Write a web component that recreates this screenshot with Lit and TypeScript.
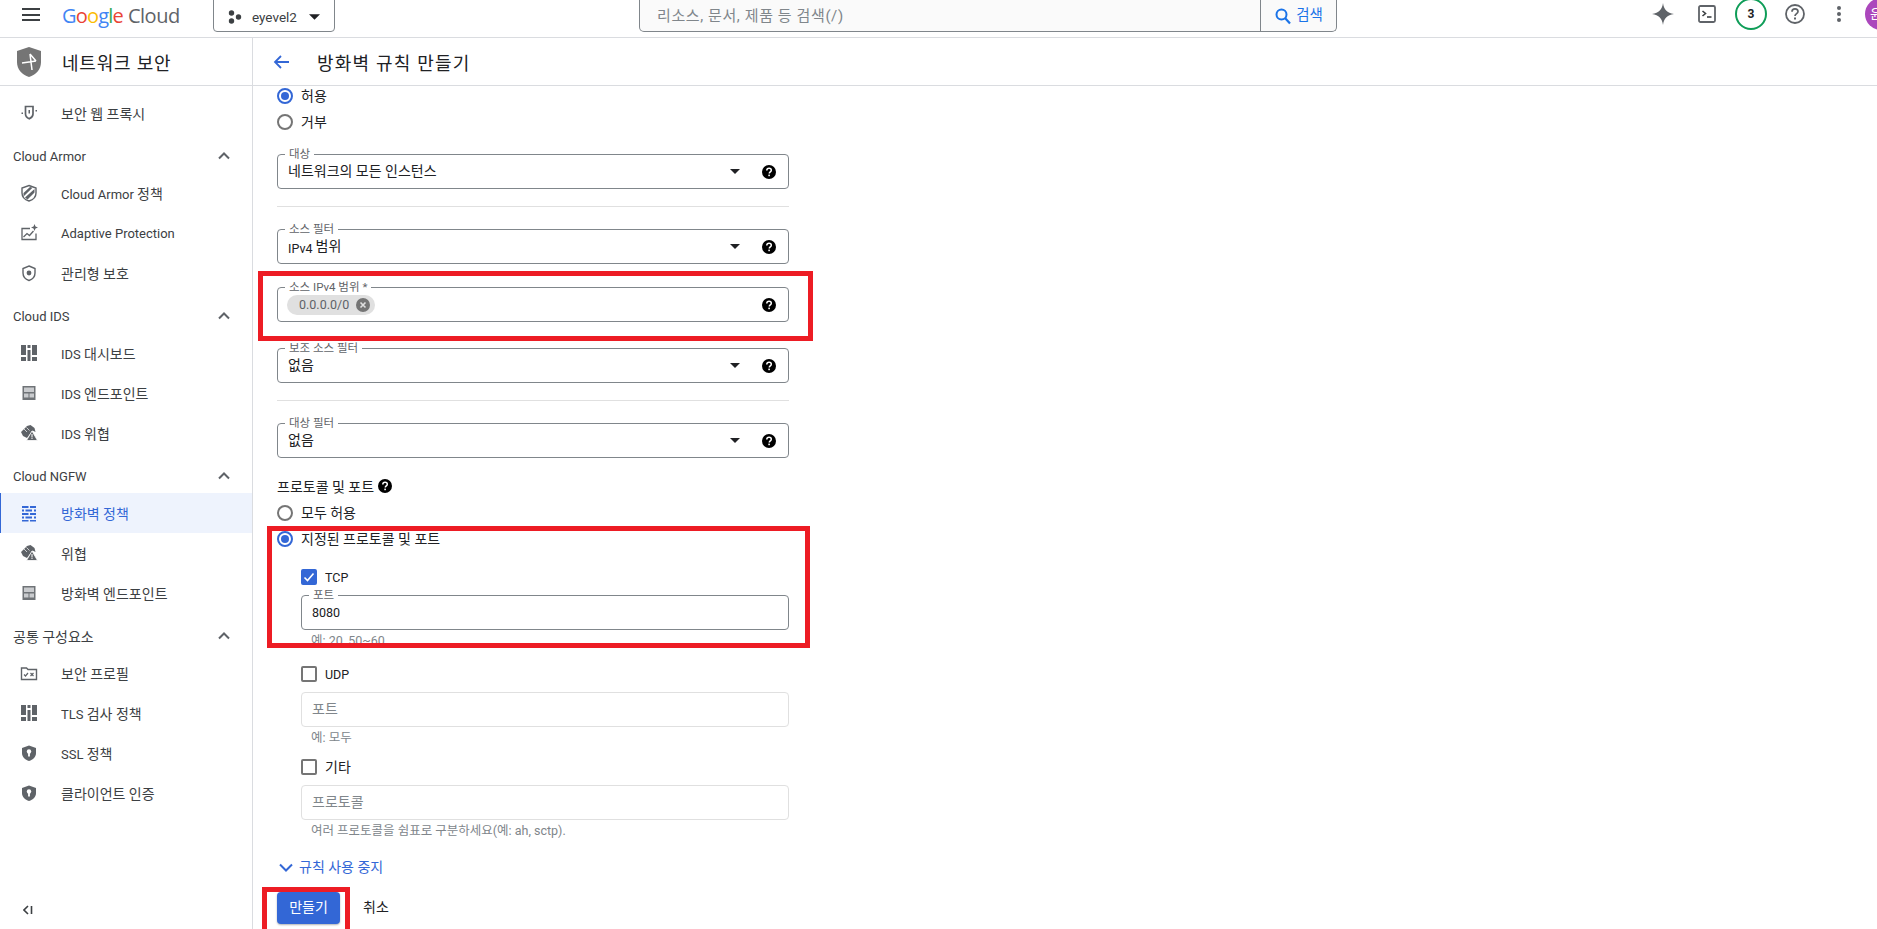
import { LitElement, html, css, svg } from "lit";
import { customElement } from "lit/decorators.js";

const icons: Record<string, any> = {
  proxy: svg`<path d="M5.500 2.500h7.500v7.500c0 2.400-1.700 3.800-3.700 4.800-2.100-1-3.800-2.400-3.800-4.800z" fill="none" stroke="#5f6368" stroke-width="1.700"/><rect x="8.500" y="6" width="1.500" height="3.500" fill="#5f6368"/><rect x="1.500" y="8.500" width="1.500" height="1.500" fill="#5f6368"/><rect x="15.500" y="6" width="1.500" height="1.500" fill="#5f6368"/>`,
  armor: svg`<path d="M9 1.500l7 2.500v5c0 4-3 6.800-7 8-4-1.200-7-4-7-8V4z" fill="none" stroke="#5f6368" stroke-width="1.400"/><path d="M3.500 9L10 3l2.500.8-9 8.700zM5 13.500L14.500 5v3.500l-7 7z" fill="#5f6368"/>`,
  adaptive: svg`<path d="M10 4.500H2v11h14V9.500" fill="none" stroke="#5f6368" stroke-width="1.300"/><path d="M3.500 13l3.500-3.500 2.500 2 4-4.500" fill="none" stroke="#5f6368" stroke-width="1.300"/><path d="M14.500 0l1 2.500 2.500 1-2.500 1-1 2.500-1-2.500-2.500-1 2.500-1z" fill="#5f6368"/>`,
  managed: svg`<path d="M9 2l6 2.500v4.500c0 3.700-2.500 6.300-6 7.500-3.500-1.200-6-3.800-6-7.500V4.500z" fill="none" stroke="#5f6368" stroke-width="1.400"/><circle cx="9" cy="9" r="2.400" fill="#5f6368"/>`,
  dash: svg`<path d="M1 1h5v10H1zM1 13h5v4H1zM7.500 1h3v3h-3zM7.500 6h3v11h-3zM12 1h5v10h-5zM12 13h5v4h-5z" fill="#5f6368"/>`,
  endpoint: svg`<rect x="2.500" y="2" width="13" height="14" fill="#6f7377"/><path d="M4 3.500h10v4.500H4zM4 9.500h4.500v4H4zM9.500 9.500H14v4H9.500z" fill="#c9cbce"/>`,
  threat: svg`<path d="M7 2l3.500-1 4 3 1 4-3-1.500L7 14l-4-2-2-4z" fill="#5f6368"/><path d="M12 7l5.500 9.500h-11z" fill="#5f6368" stroke="#fff" stroke-width=".800"/><rect x="11.500" y="10" width="1" height="3.500" fill="#fff"/><rect x="11.500" y="14" width="1" height="1" fill="#fff"/><path d="M4 5l3 3M6.500 3.500l3 3" stroke="#fff" stroke-width=".700"/>`,
  firewall: svg`<path d="M2 2h6.500v2H2zM10 2h6v2h-6zM2 5.500h2v2H2zM5.500 5.500h6.500v2H5.500zM14 5.500h2v2h-2zM2 9h6.500v2H2zM10 9h6v2h-6zM2 12.500h2v2H2zM5.500 12.500h6.500v2H5.500zM14 12.500h2v2h-2zM2 16h6.500v1.500H2zM10 16h6v1.500h-6z" fill="#3367d6"/>`,
  profile: svg`<path d="M1.500 4h5l1.500 1.500h8.500V15.500H1.500z" fill="none" stroke="#5f6368" stroke-width="1.400"/><path d="M4 10.500l1.500 1.500 2.500-3" fill="none" stroke="#5f6368" stroke-width="1.200"/><path d="M10.500 9l3 3M13.500 9l-3 3" stroke="#5f6368" stroke-width="1.200"/>`,
  ssl: svg`<path d="M9 1.500l7 2.500v5c0 4-3 6.800-7 8-4-1.200-7-4-7-8V4z" fill="#5f6368"/><circle cx="9" cy="7.500" r="2.200" fill="#fff"/><rect x="8.100" y="8" width="1.800" height="4.500" fill="#fff"/>`,
};

const icon = (name: string) =>
  html`<svg class="nav-icon" viewBox="0 0 18 18" width="18" height="18">${icons[name]}</svg>`;

/* Hangul runs are set a little larger than the Latin around them. */
const h = (s: string) =>
  s.split(/([가-힣]+(?: [가-힣]+)*)/).map((part, i) => (i % 2 ? html`<span class="h">${part}</span>` : part));

const chevronUp = html`<svg class="chev" viewBox="0 0 12 8" width="12" height="8"><path d="M1 6.500l5-5 5 5" fill="none" stroke="#5f6368" stroke-width="2"/></svg>`;
const caret = html`<svg class="caret" viewBox="0 0 10 5" width="10" height="5"><path d="M0 0h10L5 5z" fill="#202124"/></svg>`;
const helpDot = html`<svg class="help" viewBox="0 0 14 14" width="14" height="14"><circle cx="7" cy="7" r="7" fill="#000"/><path d="M4.800 5.400c0-1.300 1-2.200 2.300-2.200s2.200.9 2.200 2c0 1.600-2 1.700-2 3.300" fill="none" stroke="#fff" stroke-width="1.500"/><rect x="6.300" y="9.600" width="1.600" height="1.600" fill="#fff"/></svg>`;

type Item = { i: string; t: string; active?: boolean };
const nav: { head?: string; items: Item[] }[] = [
  { items: [{ i: "proxy", t: "보안 웹 프록시" }] },
  { head: "Cloud Armor", items: [
    { i: "armor", t: "Cloud Armor 정책" },
    { i: "adaptive", t: "Adaptive Protection" },
    { i: "managed", t: "관리형 보호" },
  ] },
  { head: "Cloud IDS", items: [
    { i: "dash", t: "IDS 대시보드" },
    { i: "endpoint", t: "IDS 엔드포인트" },
    { i: "threat", t: "IDS 위협" },
  ] },
  { head: "Cloud NGFW", items: [
    { i: "firewall", t: "방화벽 정책", active: true },
    { i: "threat", t: "위협" },
    { i: "endpoint", t: "방화벽 엔드포인트" },
  ] },
  { head: "공통 구성요소", items: [
    { i: "profile", t: "보안 프로필" },
    { i: "dash", t: "TLS 검사 정책" },
    { i: "ssl", t: "SSL 정책" },
    { i: "ssl", t: "클라이언트 인증" },
  ] },
];

@customElement("app-root")
export class AppRoot extends LitElement {
  static styles = css`
    :host {
      display: block;
      width: 1877px;
      height: 929px;
      overflow: hidden;
      background: #fff;
      font-family: Roboto, "Noto Sans CJK KR", sans-serif;
      font-size: 12.5px;
      color: #202124;
    }
    .h { font-size: 14px; }
    .form .h { display: inline-block; transform: translateY(-1px); }
    .form .field .h, .form .actions .h { transform: translateY(-2px); }
    .form .proto .h { transform: none; }
    .top {
      height: 37px;
      border-bottom: 1px solid #dadce0;
      display: flex;
      align-items: flex-end;
      overflow: hidden;
      position: relative;
    }
    .burger { width: 18px; margin: 0 0 16px 22px; display: flex; flex-direction: column; gap: 3.500px; flex: none; }
    .burger i { display: block; height: 2px; background: #3c4043; }
    .logo {
      margin: 0 0 9px 22px; width: 151px; flex: none;
      font-family: "Open Sans", sans-serif; font-size: 20px; line-height: 24px; letter-spacing: -.8px; white-space: nowrap;
    }
    .logo .cloud { color: #5f6368; margin-left: 5px; letter-spacing: -.5px; }
    .project {
      width: 122px; height: 42px; box-sizing: border-box; flex: none;
      margin: 0 0 5px 0;
      border: 1px solid #80868b; border-radius: 4px;
      display: flex; align-items: flex-end; padding: 0 0 5px 14px; gap: 10px;
      color: #3c4043; font-size: 13.500px;
    }
    .project span { line-height: 18px; }
    .project .caret { margin: 0 0 6px 2px; width: 11px; height: 6px; }
    .search {
      width: 698px; height: 42px; box-sizing: border-box; flex: none;
      margin: 0 0 5px 304px;
      border: 1px solid #80868b; border-top: 0; border-radius: 0 0 5px 5px;
      background: #fafafa;
      display: flex; align-items: flex-end;
    }
    .search .ph { flex: 1; padding: 0 0 6px 17px; color: #80868b; font-size: 15px; line-height: 18px; letter-spacing: .6px; }
    .search .btn {
      width: 76px; height: 100%; box-sizing: border-box;
      border-left: 1px solid #80868b;
      display: flex; align-items: flex-end; justify-content: center; gap: 4px;
      padding-bottom: 6px;
      color: #1a73e8; font-size: 14.500px; line-height: 18px;
    }
    .tools { position: relative; flex: 1; align-self: stretch; display: flex; align-items: center; }
    .tool { flex: none; display: flex; align-items: center; justify-content: center; width: 44px; height: 30px; margin-top: -9px; }
    .tools .first { margin-left: 304px; }
    .badge {
      width: 28px; height: 28px; border: 2px solid #0f9d58; border-radius: 50%;
      display: flex; align-items: center; justify-content: center;
      font-size: 12px; font-weight: 700; color: #202124;
      flex: none; box-sizing: content-box;
    }
    .avatar {
      position: absolute; left: 1865px; top: -2px;
      width: 32px; height: 32px; border-radius: 50%;
      background: #ab47bc; color: #fff; font-size: 13px; line-height: 32px; padding-left: 5px; box-sizing: border-box;
    }
    .body { display: flex; height: 891px; }
    .side { width: 252px; flex: none; border-right: 1px solid #dadce0; display: flex; flex-direction: column; font-size: 13px; }
    .side-head {
      height: 48px; box-sizing: border-box; border-bottom: 1px solid #dadce0;
      display: flex; align-items: center; padding-left: 17px; gap: 21px; flex: none;
      font-size: 18px; letter-spacing: .8px; color: #202124;
    }
    .side-list { padding-top: 7px; flex: 1; }
    .sec-head {
      height: 40px; box-sizing: border-box; padding: 6px 22px 0 13px;
      display: flex; align-items: center; justify-content: space-between;
      color: #3c4043;
    }
    .item {
      height: 40px; box-sizing: border-box; padding-left: 20px;
      display: flex; align-items: center; gap: 23px; color: #3c4043;
    }
    .item.active { background: #eef3fd; color: #3367d6; border-left: 1px solid #3367d6; padding-left: 19px; }
    .nav-icon { flex: none; }
    .collapse { height: 38px; flex: none; padding-left: 23px; color: #3c4043; }
    .main { flex: 1; min-width: 0; display: flex; flex-direction: column; }
    .main-head {
      height: 48px; box-sizing: border-box; border-bottom: 1px solid #dadce0; flex: none;
      display: flex; align-items: center; padding-left: 20px; gap: 28px;
      font-size: 18px; letter-spacing: 1.200px;
    }
    .scroll { flex: 1; overflow: hidden; }
    .form { position: relative; margin-left: 24px; width: 512px; padding-top: 1px; }
    .radio { height: 18px; display: flex; align-items: center; gap: 8px; margin-bottom: 8px; }
    .dot { width: 12px; height: 12px; border: 2px solid #757575; border-radius: 50%; flex: none; position: relative; box-sizing: content-box; }
    .dot.on { border-color: #3367d6; }
    .dot.on::after { content: ""; position: absolute; inset: 2px; border-radius: 50%; background: #3367d6; }
    .field {
      position: relative; height: 35px; box-sizing: border-box;
      border: 1px solid #80868b; border-radius: 4px;
      display: flex; align-items: center; padding: 0 12px 0 10px;
      margin-top: 23px;
    }
    .field .label {
      position: absolute; left: 7px; top: -8px; padding: 0 4px; background: #fff;
      font-size: 11.500px; line-height: 14px; color: #5f6368; white-space: nowrap;
    }
    .field .val { flex: 1; }
    .field .caret { margin-right: 22px; }
    .field.aux { margin-top: 26px; }
    .rule { height: 1px; background: #e0e0e0; margin-top: 17px; }
    .rule + .field { margin-top: 22px; }
    .proto { height: 18px; display: flex; align-items: center; gap: 4px; margin-top: 19px; margin-bottom: 9px; }
    .chip {
      height: 20px; background: #e0e0e0; border-radius: 10px; width: 88px; box-sizing: border-box;
      display: flex; align-items: center; gap: 7px; padding-left: 12px; color: #5f6368; margin-left: -1px;
    }
    .sub { margin-left: 24px; }
    .check { height: 18px; display: flex; align-items: center; gap: 8px; margin-top: 17px; }
    .check.first { margin-top: 20px; }
    .check.last { margin-top: 13px; }
    .box { width: 12px; height: 12px; border: 2px solid #757575; border-radius: 2px; flex: none; box-sizing: content-box; }
    .box.on { border-color: #3367d6; background: #3367d6; display: flex; align-items: center; justify-content: center; }
    .sub .field { margin-top: 9px; }
    .sub .field.off { border-color: #e0e0e0; color: #80868b; }
    .hint { height: 14px; margin: 4px 0 0 10px; font-size: 12.500px; line-height: 14px; color: #80868b; white-space: nowrap; }
    .more { height: 18px; margin-top: 20px; display: flex; align-items: center; gap: 6px; color: #3367d6; margin-left: 2px; }
    .actions { display: flex; align-items: center; margin-top: 16px; gap: 23px; }
    .primary {
      width: 63px; height: 32px; background: #3367d6; color: #fff; border: 0; border-radius: 4px; padding: 0;
      box-shadow: 0 1px 2px rgba(60,64,67,.4);
      font: inherit;
    }
    .cancel { color: #202124; }
    .mark { position: absolute; border: 5px solid #ed1c24; box-sizing: border-box; pointer-events: none; }
    .m1 { left: -19px; top: 185px; width: 555px; height: 70px; }
    .m2 { left: -10px; top: 440px; width: 543px; height: 122px; }
    .m3 { left: -15px; top: 801px; width: 88px; height: 50px; }
  `;

  private field(label: string, val: string, cls = "") {
    return html`<div class="field ${cls}"><span class="label">${label}</span><span class="val">${h(val)}</span>${caret}${helpDot}</div>`;
  }

  render() {
    return html`
      <div class="top">
        <div class="burger"><i></i><i></i><i></i></div>
        <div class="logo"><span style="color:#4285f4">G</span><span style="color:#ea4335">o</span><span style="color:#fbbc04">o</span><span style="color:#4285f4">g</span><span style="color:#34a853">l</span><span style="color:#ea4335">e</span><span class="cloud">Cloud</span></div>
        <div class="project">
          <svg viewBox="0 0 14 14" width="14" height="14" style="margin-bottom:2px"><circle cx="3.500" cy="3" r="2.700" fill="#3c4043"/><circle cx="10.500" cy="7" r="2.700" fill="#3c4043"/><circle cx="3.500" cy="11" r="2.700" fill="#3c4043"/></svg>
          <span>eyevel2</span>${caret}
        </div>
        <div class="search">
          <div class="ph">리소스, 문서, 제품 등 검색(/)</div>
          <div class="btn">
            <svg viewBox="0 0 18 18" width="18" height="18"><circle cx="7.500" cy="7.500" r="5" fill="none" stroke="#1a73e8" stroke-width="2"/><path d="M11 11l5 5.500" stroke="#1a73e8" stroke-width="2.200"/></svg>
            검색
          </div>
        </div>
        <div class="tools">
          <div class="tool first"><svg viewBox="0 0 24 24" width="24" height="24"><path d="M12 1c.8 6.500 4 10 11 11-7 1-10.200 4.500-11 11-.8-6.500-4-10-11-11 7-1 10.200-4.500 11-11z" fill="#5f6368"/></svg></div>
          <div class="tool"><svg viewBox="0 0 18 18" width="18" height="18"><rect x="1" y="1" width="16" height="16" rx="1.500" fill="none" stroke="#5f6368" stroke-width="1.800"/><path d="M4.500 6l3 2.500-3 2.500" fill="none" stroke="#3c4043" stroke-width="1.600"/><path d="M9 12h4.500" stroke="#3c4043" stroke-width="1.600"/></svg></div>
          <div class="tool"><div class="badge">3</div></div>
          <div class="tool"><svg viewBox="0 0 20 20" width="20" height="20"><circle cx="10" cy="10" r="9" fill="none" stroke="#5f6368" stroke-width="1.800"/><path d="M7 7.700c0-1.700 1.300-2.900 3-2.900s3 1.100 3 2.700c0 2-3 2.300-3 4.600" fill="none" stroke="#5f6368" stroke-width="1.700"/><rect x="9" y="13.500" width="2" height="2" fill="#5f6368"/></svg></div>
          <div class="tool"><svg viewBox="0 0 6 18" width="6" height="18"><circle cx="3" cy="3" r="2" fill="#5f6368"/><circle cx="3" cy="9" r="2" fill="#5f6368"/><circle cx="3" cy="15" r="2" fill="#5f6368"/></svg></div>
        </div>
        <div class="avatar">윤</div>
      </div>
      <div class="body">
        <aside class="side">
          <div class="side-head">
            <svg viewBox="0 0 24 30" width="24" height="30"><path d="M12 0l12 4v11c0 7.500-5 12.500-12 15C5 27.500 0 22.500 0 15V4z" fill="#757575"/><path d="M5 16l14-2M13 7l6 7M13 7l2 16" fill="none" stroke="#fff" stroke-width="1.500"/></svg>
            네트워크 보안
          </div>
          <div class="side-list">
            ${nav.map((s) => html`
              ${s.head ? html`<div class="sec-head"><span>${h(s.head)}</span>${chevronUp}</div>` : ""}
              ${s.items.map((it) => html`<div class="item ${it.active ? "active" : ""}">${icon(it.i)}<span>${h(it.t)}</span></div>`)}
            `)}
          </div>
          <div class="item collapse">
            <svg viewBox="0 0 10 10" width="10" height="10"><path d="M5 1L1 5l4 4" fill="none" stroke="#3c4043" stroke-width="1.600"/><path d="M8.500 1v8" stroke="#3c4043" stroke-width="1.600"/></svg>
          </div>
        </aside>
        <main class="main">
          <div class="main-head">
            <svg viewBox="0 0 16 14" width="16" height="14"><path d="M8 1L2 7l6 6M2 7h14" fill="none" stroke="#3367d6" stroke-width="1.800"/></svg>
            <span>방화벽 규칙 만들기</span>
          </div>
          <div class="scroll">
            <div class="form">
              <div class="radio"><span class="dot on"></span>${h("허용")}</div>
              <div class="radio"><span class="dot"></span>${h("거부")}</div>
              ${this.field("대상", "네트워크의 모든 인스턴스")}
              <div class="rule"></div>
              ${this.field("소스 필터", "IPv4 범위")}
              <div class="field">
                <span class="label">소스 IPv4 범위 *</span>
                <span class="val"><span class="chip">0.0.0.0/0
                  <svg viewBox="0 0 14 14" width="14" height="14"><circle cx="7" cy="7" r="7" fill="#757575"/><path d="M4.500 4.500l5 5M9.500 4.500l-5 5" stroke="#e0e0e0" stroke-width="1.600"/></svg>
                </span></span>
                ${helpDot}
              </div>
              ${this.field("보조 소스 필터", "없음", "aux")}
              <div class="rule"></div>
              ${this.field("대상 필터", "없음")}
              <div class="proto">${h("프로토콜 및 포트")} ${helpDot}</div>
              <div class="radio"><span class="dot"></span>${h("모두 허용")}</div>
              <div class="radio"><span class="dot on"></span>${h("지정된 프로토콜 및 포트")}</div>
              <div class="sub">
                <div class="check first"><span class="box on"><svg viewBox="0 0 12 12" width="12" height="12"><path d="M1.500 6.500l3 3 6-7" fill="none" stroke="#fff" stroke-width="1.600"/></svg></span>TCP</div>
                <div class="field"><span class="label">포트</span><span class="val">8080</span></div>
                <div class="hint">예: 20, 50~60</div>
                <div class="check"><span class="box"></span>UDP</div>
                <div class="field off"><span class="val">${h("포트")}</span></div>
                <div class="hint">예: 모두</div>
                <div class="check last"><span class="box"></span>${h("기타")}</div>
                <div class="field off"><span class="val">${h("프로토콜")}</span></div>
                <div class="hint">여러 프로토콜을 쉼표로 구분하세요(예: ah, sctp).</div>
              </div>
              <div class="more">
                <svg viewBox="0 0 14 9" width="14" height="9"><path d="M1 1.500l6 6 6-6" fill="none" stroke="#3367d6" stroke-width="2"/></svg>
                ${h("규칙 사용 중지")}
              </div>
              <div class="actions">
                <button class="primary">${h("만들기")}</button>
                <span class="cancel">${h("취소")}</span>
              </div>
              <div class="mark m1"></div>
              <div class="mark m2"></div>
              <div class="mark m3"></div>
            </div>
          </div>
        </main>
      </div>
    `;
  }
}
